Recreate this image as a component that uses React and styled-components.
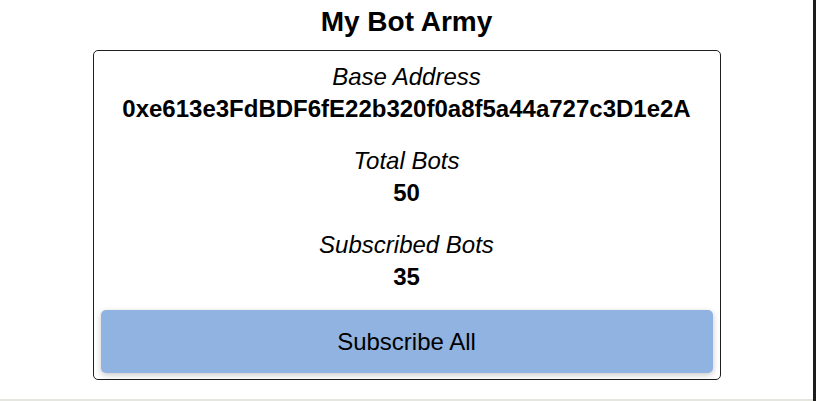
import React from 'react';
import styled, { createGlobalStyle } from 'styled-components';

const GlobalStyle = createGlobalStyle`
  html, body {
    margin: 0;
    padding: 0;
    background: #ffffff;
  }
  body {
    font-family: 'Liberation Sans', Arial, sans-serif;
    color: #000000;
  }
`;

const Screen = styled.div`
  display: flex;
  height: 100vh;
`;

const Main = styled.main`
  flex: 1;
  display: flex;
  flex-direction: column;
  align-items: center;
  box-sizing: border-box;
  padding-top: 6px;
  border-bottom: 2px solid #e6e6e1;
`;

const EdgeStrip = styled.div`
  width: 3px;
  background: #1c1c1c;
`;

const Title = styled.h1`
  margin: 0;
  font-size: 28px;
  line-height: 32px;
  font-weight: 700;
  text-align: center;
`;

const Card = styled.section`
  box-sizing: border-box;
  width: 628px;
  margin-top: 12px;
  padding: 10px 7px 6px;
  border: 1px solid #1f1f1f;
  border-radius: 5px;
  display: flex;
  flex-direction: column;
  gap: 20px;
  text-align: center;
`;

const Field = styled.div`
  display: flex;
  flex-direction: column;
`;

const Label = styled.div`
  font-size: 24px;
  line-height: 32px;
  font-style: italic;
`;

const Value = styled.div`
  font-size: 24px;
  line-height: 32px;
  font-weight: 700;
`;

const SubscribeButton = styled.button`
  margin-top: -3px;
  height: 63px;
  border: none;
  border-radius: 5px;
  background: #91b3e1;
  box-shadow: 0 2px 6px rgba(0, 0, 0, 0.22);
  font-family: 'Liberation Sans', Arial, sans-serif;
  font-size: 24px;
  color: #000000;
  cursor: pointer;
`;

const stats = [
  { label: 'Base Address', value: '0xe613e3FdBDF6fE22b320f0a8f5a44a727c3D1e2A' },
  { label: 'Total Bots', value: '50' },
  { label: 'Subscribed Bots', value: '35' },
];

export default function App() {
  return (
    <>
      <GlobalStyle />
      <Screen>
        <Main>
          <Title>My Bot Army</Title>
          <Card>
            {stats.map((s) => (
              <Field key={s.label}>
                <Label>{s.label}</Label>
                <Value>{s.value}</Value>
              </Field>
            ))}
            <SubscribeButton>Subscribe All</SubscribeButton>
          </Card>
        </Main>
        <EdgeStrip />
      </Screen>
    </>
  );
}
